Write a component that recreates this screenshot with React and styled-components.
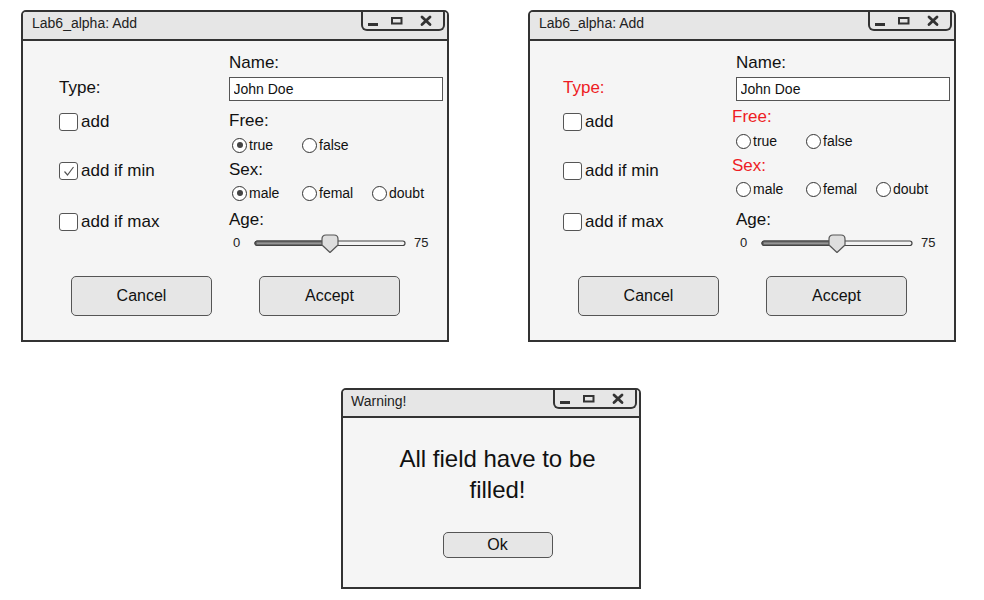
import React from "react";
import styled, { createGlobalStyle } from "styled-components";

const GlobalStyle = createGlobalStyle`
  html, body { margin: 0; padding: 0; background: #ffffff; }
  body { font-family: "Liberation Sans", Arial, sans-serif; color: #111; }
  * { box-sizing: border-box; }
`;

const Page = styled.div`
  width: 984px;
  height: 600px;
  padding-top: 10px;
  display: flex;
  flex-direction: column;
`;

const TopRow = styled.div`
  display: flex;
  gap: 79px;
  padding-left: 21px;
`;

const BottomRow = styled.div`
  display: flex;
  padding-left: 341px;
  margin-top: 46px;
`;

const Window = styled.div`
  width: ${(p) => p.$w}px;
  height: ${(p) => p.$h}px;
  border: 2px solid #333;
  border-radius: 5px 5px 0 0;
  background: #f5f5f5;
  display: flex;
  flex-direction: column;
  overflow: hidden;
`;

const TitleBar = styled.div`
  height: ${(p) => p.$h}px;
  flex: none;
  background: #e6e6e6;
  border-bottom: 2px solid #333;
  display: flex;
  justify-content: space-between;
  align-items: flex-start;
`;

const Title = styled.div`
  font-size: 14px;
  line-height: ${(p) => p.$lh}px;
  padding-left: ${(p) => p.$pl}px;
  color: #222;
`;

const Controls = styled.div`
  width: 84px;
  height: 19px;
  margin-right: 2px;
  border: 2px solid #333;
  border-top: none;
  border-radius: 0 0 6px 6px;
  display: flex;
`;

const Body = styled.div`
  flex: 1;
  display: flex;
  flex-direction: column;
`;

const Form = styled.div`
  display: flex;
`;

const LeftCol = styled.div`
  width: 206px;
  padding-left: ${(p) => p.$pl}px;
  padding-top: 37px;
  display: flex;
  flex-direction: column;
`;

const RightCol = styled.div`
  width: 214px;
  padding-top: 12px;
  display: flex;
  flex-direction: column;
`;

const FieldLabel = styled.div`
  font-size: 17px;
  line-height: 20px;
  height: 20px;
  margin-top: ${(p) => p.$mt || 0}px;
  margin-left: ${(p) => p.$ml || 0}px;
  color: ${(p) => (p.$error ? "#ee1c24" : "#111")};
`;

const CheckRow = styled.div`
  display: flex;
  align-items: center;
  height: 18px;
  margin-top: ${(p) => p.$mt}px;
  gap: 3px;
`;

const CheckBox = styled.div`
  width: 19px;
  height: 18px;
  border: 1.5px solid #555;
  border-radius: 3px;
  background: #fff;
  display: flex;
  align-items: center;
  justify-content: center;
  flex: none;
`;

const CheckText = styled.span`
  font-size: 17px;
  line-height: 18px;
`;

const TextInput = styled.input`
  width: 214px;
  height: 24px;
  margin: 4px 0 0 0;
  border: 1.5px solid #555;
  background: #fff;
  font: 14px "Liberation Sans", Arial, sans-serif;
  color: #111;
  padding: 0 0 0 3.5px;
  outline: none;
`;

const ChoiceGroup = styled.div`
  height: 100px;
  display: flex;
  flex-direction: column;
`;

const RadioRow = styled.div`
  display: flex;
  height: 16px;
  margin-top: ${(p) => p.$mt}px;
  padding-left: ${(p) => (p.$error ? 0 : 3)}px;
`;

const RadioOption = styled.div`
  width: 70px;
  display: flex;
  align-items: center;
  gap: 2px;
  font-size: 14px;
  line-height: 16px;
`;

const RadioCircle = styled.div`
  width: 15px;
  height: 15px;
  border-radius: 50%;
  border: 1.5px solid #333;
  background: #fff;
  display: flex;
  align-items: center;
  justify-content: center;
  flex: none;
`;

const RadioDot = styled.div`
  width: 6px;
  height: 6px;
  border-radius: 50%;
  background: #444;
`;

const SliderRow = styled.div`
  display: flex;
  align-items: center;
  height: 20px;
  margin-top: 3px;
  padding-left: 4px;
`;

const SliderValue = styled.span`
  font-size: 13px;
  line-height: 20px;
  width: ${(p) => p.$w}px;
  margin-left: ${(p) => p.$ml || 0}px;
  color: #222;
`;

const ButtonRow = styled.div`
  display: flex;
  gap: 47px;
  padding-left: 48px;
  margin-top: 23px;
`;

const Button = styled.div`
  width: ${(p) => p.$w}px;
  height: ${(p) => p.$h}px;
  background: #e6e6e6;
  border: 1.5px solid #555;
  border-radius: 5px;
  display: flex;
  align-items: center;
  justify-content: center;
  font-size: 16px;
  color: #111;
`;

const WarnBody = styled.div`
  flex: 1;
  display: flex;
  flex-direction: column;
  align-items: center;
  padding-left: 13px;
`;

const Message = styled.div`
  font-size: 24px;
  line-height: 31px;
  text-align: center;
  margin-top: 25px;
  width: 240px;
  color: #111;
`;

const OkWrap = styled.div`
  margin-top: 27px;
`;

function WindowControls() {
  return (
    <Controls>
      <svg width="80" height="17" viewBox="0 0 80 17">
        <rect x="5" y="11" width="10" height="3" fill="#333" />
        <rect x="29" y="6" width="9.5" height="5.5" fill="none" stroke="#333" strokeWidth="2" />
        <path d="M59 5 L67 12.5 M67 5 L59 12.5" stroke="#333" strokeWidth="2.8" strokeLinecap="round" />
      </svg>
    </Controls>
  );
}

function Check({ checked, label, mt }) {
  return (
    <CheckRow $mt={mt}>
      <CheckBox>
        {checked && (
          <svg width="14" height="14" viewBox="0 0 14 14">
            <polyline points="2.5,7.5 5.5,11 11.5,3" fill="none" stroke="#555" strokeWidth="1.2" />
          </svg>
        )}
      </CheckBox>
      <CheckText>{label}</CheckText>
    </CheckRow>
  );
}

function Radios({ options, selected, mt, error }) {
  return (
    <RadioRow $mt={mt} $error={error}>
      {options.map((o) => (
        <RadioOption key={o}>
          <RadioCircle>{selected === o && <RadioDot />}</RadioCircle>
          {o}
        </RadioOption>
      ))}
    </RadioRow>
  );
}

function Slider() {
  return (
    <SliderRow>
      <SliderValue $w={21}>0</SliderValue>
      <svg width="152" height="20" viewBox="0 0 152 20">
        <rect x="1" y="8" width="150" height="4.5" rx="2.2" fill="#f3f3f3" stroke="#444" strokeWidth="1.2" />
        <rect x="1" y="8" width="74" height="4.5" rx="2.2" fill="#6a6a6a" stroke="#444" strokeWidth="1.2" />
        <line x1="3" y1="10.2" x2="74" y2="10.2" stroke="#aaa" strokeWidth="1" />
        <path
          d="M68 6 Q68 2 72 2 H80 Q84 2 84 6 V12 L76 19.5 L68 12 Z"
          fill="#dedede"
          stroke="#555"
          strokeWidth="1.2"
          strokeLinejoin="round"
        />
      </svg>
      <SliderValue $ml={8}>75</SliderValue>
    </SliderRow>
  );
}

function AddWindow({ error }) {
  return (
    <Window $w={428} $h={332}>
      <TitleBar $h={29}>
        <Title $lh={23} $pl={9}>Lab6_alpha: Add</Title>
        <WindowControls />
      </TitleBar>
      <Body>
        <Form>
          <LeftCol $pl={error ? 33 : 36}>
            <FieldLabel $error={error}>Type:</FieldLabel>
            <Check mt={15} label="add" />
            <Check mt={31} label="add if min" checked={!error} />
            <Check mt={33} label="add if max" />
          </LeftCol>
          <RightCol>
            <FieldLabel>Name:</FieldLabel>
            <TextInput readOnly value="John Doe" />
            <ChoiceGroup>
              <FieldLabel $mt={error ? 6 : 10} $ml={error ? -4 : 0} $error={error}>Free:</FieldLabel>
              <Radios mt={6} error={error} options={["true", "false"]} selected={error ? null : "true"} />
              <FieldLabel $mt={7} $ml={error ? -4 : 0} $error={error}>Sex:</FieldLabel>
              <Radios mt={5} error={error} options={["male", "femal", "doubt"]} selected={error ? null : "male"} />
            </ChoiceGroup>
            <FieldLabel $mt={9}>Age:</FieldLabel>
            <Slider />
          </RightCol>
        </Form>
        <ButtonRow>
          <Button $w={141} $h={40}>Cancel</Button>
          <Button $w={141} $h={40}>Accept</Button>
        </ButtonRow>
      </Body>
    </Window>
  );
}

export default function App() {
  return (
    <>
      <GlobalStyle />
      <Page>
        <TopRow>
          <AddWindow />
          <AddWindow error />
        </TopRow>
        <BottomRow>
          <Window $w={300} $h={201}>
            <TitleBar $h={28}>
              <Title $lh={22} $pl={8}>Warning!</Title>
              <WindowControls />
            </TitleBar>
            <WarnBody>
              <Message>All field have to be filled!</Message>
              <OkWrap>
                <Button $w={110} $h={26}>Ok</Button>
              </OkWrap>
            </WarnBody>
          </Window>
        </BottomRow>
      </Page>
    </>
  );
}
